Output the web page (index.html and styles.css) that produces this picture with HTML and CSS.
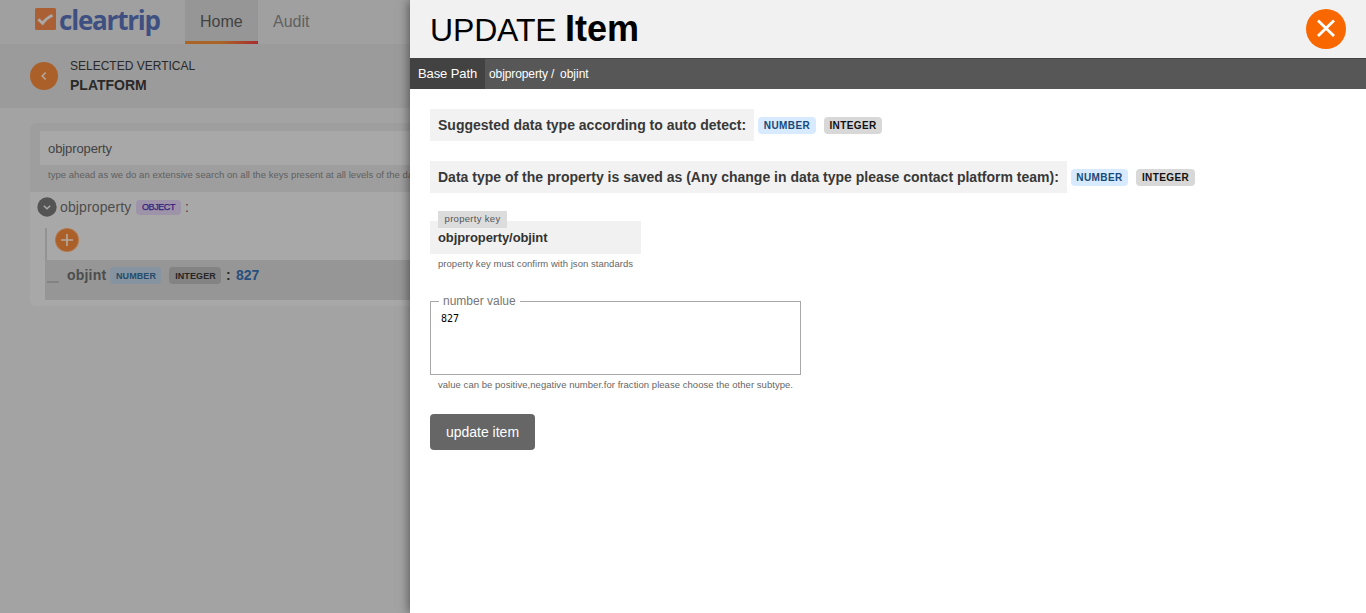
FILE: index.html
```html
<!DOCTYPE html>
<html lang="en">
<head>
<meta charset="utf-8">
<title>Update Item</title>
<link rel="stylesheet" href="styles.css">
</head>
<body>
<div class="page">
  <header class="topbar">
    <div class="logo">
      <svg class="logo-mark" viewBox="0 0 21 22"><rect width="21" height="22" rx="1.5" fill="#aa6034"/><path d="M3.300 11.300l4.400 4q4-5.500 9.800-8" fill="none" stroke="#a9a9a9" stroke-width="2.800"/></svg>
      <span class="logo-text">cleartrip</span>
    </div>
    <nav class="nav">
      <a class="tab tab-active">Home</a>
      <a class="tab">Audit</a>
    </nav>
  </header>
  <section class="vertical">
    <span class="back"><svg viewBox="0 0 28 28" width="28" height="28"><path d="M15.700 10.500l-3.500 3.500 3.500 3.500" fill="none" stroke="#b5aaa2" stroke-width="1.500"/></svg></span>
    <div class="vertical-text">
      <span class="vertical-label">SELECTED VERTICAL</span>
      <strong class="vertical-name">PLATFORM</strong>
    </div>
  </section>
  <main class="card">
    <div class="search">
      <div class="search-input">objproperty</div>
      <p class="search-hint">type ahead as we do an extensive search on all the keys present at all levels of the data</p>
    </div>
    <div class="tree">
      <div class="node">
        <svg class="toggle" viewBox="0 0 20 20"><circle cx="10" cy="10" r="9.700" fill="#545454"/><path d="M6.800 8.700l3.200 3.100 3.200-3.100" fill="none" stroke="#aaa" stroke-width="1.500"/></svg>
        <span class="node-key">objproperty</span>
        <span class="tag-dim tag-object">OBJECT</span>
        <span class="node-colon">:</span>
      </div>
      <div class="children">
        <svg class="add" viewBox="0 0 24 24"><circle cx="12" cy="12" r="12" fill="#b3774c"/><circle cx="12" cy="12" r="11" fill="#ab602a"/><path d="M12 6v12M6 12h12" stroke="#b5aaa2" stroke-width="1.600"/></svg>
        <div class="leaf">
          <span class="branch"></span>
          <span class="leaf-key">objint</span>
          <span class="tag-dim tag-number-dim">NUMBER</span>
          <span class="tag-dim tag-integer-dim">INTEGER</span>
          <span class="leaf-colon">:</span>
          <span class="leaf-value">827</span>
        </div>
      </div>
    </div>
  </main>
</div>

<aside class="drawer">
  <header class="drawer-head">
    <h1 class="title"><span class="title-action">UPDATE</span><b class="title-item">Item</b></h1>
    <svg class="close" viewBox="0 0 40 40"><circle cx="20" cy="20" r="20" fill="#f96700"/><path d="M12 11.500l16 15.500M28 11.500l-16 15.500" stroke="#fff" stroke-width="2.800"/></svg>
  </header>
  <div class="path">
    <span class="path-base">Base Path</span>
    <span class="path-parent">objproperty</span><span class="path-slash">/</span><span class="path-leaf">objint</span>
  </div>
  <div class="drawer-body">
    <div class="type-row">
      <span class="type-text suggested">Suggested data type according to auto detect:</span>
      <span class="tag tag-number">NUMBER</span>
      <span class="tag tag-integer">INTEGER</span>
    </div>
    <div class="type-row">
      <span class="type-text saved">Data type of the property is saved as (Any change in data type please contact platform team):</span>
      <span class="tag tag-number tag-narrow">NUMBER</span>
      <span class="tag tag-integer tag-wide">INTEGER</span>
    </div>
    <div class="key-field">
      <span class="key-label">property key</span>
      <div class="key-value">objproperty/objint</div>
      <span class="hint key-hint">property key must confirm with json standards</span>
    </div>
    <fieldset class="value-field">
      <legend class="value-legend">number value</legend>
      <div class="value-text">827</div>
    </fieldset>
    <span class="hint value-hint">value can be positive,negative number.for fraction please choose the other subtype.</span>
    <button class="update">update item</button>
  </div>
</aside>
</body>
</html>
```
FILE: styles.css
```css
* { box-sizing: border-box; }
body {
  margin: 0;
  width: 1366px;
  height: 613px;
  overflow: hidden;
  background: #a3a3a3;
  font-family: "Liberation Sans", Arial, sans-serif;
  white-space: nowrap;
}
svg { display: block; flex: none; }
.page { height: 613px; }

.topbar { display: flex; height: 44px; padding-left: 35px; background: #a0a0a0; }
.logo { display: flex; width: 150px; padding-top: 8px; }
.logo-mark { width: 21px; height: 22px; }
.logo-text {
  margin: -4px 0 0 3px;
  font: 700 26px/32px "Open Sans", sans-serif;
  letter-spacing: -1.2px;
  color: #3e4f82;
}
.nav { display: flex; }
.tab { height: 44px; padding: 0 15px; font-size: 16px; line-height: 43px; color: #616161; }
.tab-active {
  width: 73px;
  color: #424242;
  background: linear-gradient(90deg, #aa6427 50%, #a82e2e) bottom / 100% 3px no-repeat #969696;
}

.vertical { display: flex; height: 64px; padding: 14px 0 0 30px; background: #9b9b9b; }
.back { width: 28px; height: 28px; margin-top: 4px; border-radius: 50%; background: #ab602a; }
.vertical-text { display: flex; flex-direction: column; margin-left: 12px; color: #292929; }
.vertical-label { font-size: 12px; line-height: 16px; }
.vertical-name { font-size: 14px; line-height: 22px; }

.card { height: 183px; margin: 15px 0 0 30px; overflow: hidden; border-radius: 6px; background: #a8a8a8; }
.search { height: 69px; padding: 8px 0 0 10px; background: #9e9e9e; }
.search-input { height: 34px; padding-left: 8px; font-size: 13px; line-height: 35px; letter-spacing: -.1px; background: #a8a8a8; color: #424242; }
.search-hint { margin: 4px 0 0 8px; font-size: 9.500px; line-height: 12px; letter-spacing: .04px; color: #606060; }
.node { display: flex; align-items: center; height: 28px; padding: 2px 0 0 7px; }
.toggle { width: 20px; height: 20px; }
.node-key { width: 79px; padding-left: 3px; font-size: 14px; letter-spacing: .12px; color: #4d4d4d; }
.node-colon { margin-left: 4px; font-size: 14px; color: #424242; }
.tag-dim { flex: none; height: 17px; border-radius: 4px; font-size: 9px; line-height: 17px; text-align: center; }
.tag-object { width: 45px; height: 15px; line-height: 15px; letter-spacing: -.4px; background: #9d94aa; color: #36207d; -webkit-text-stroke: .25px #36207d; }
.children { margin-left: 15px; border-left: 2px solid #939393; height: 72px; }
.add { width: 24px; height: 24px; margin: 8px 0 8px 8px; }
.leaf { display: flex; align-items: center; height: 40px; margin-left: -2px; padding: 0 0 10px 2px; background: #969696; }
.branch { width: 12px; height: 2px; margin-top: 13px; background: #838383; }
.leaf-key { width: 43px; margin-left: 8px; font-size: 14px; font-weight: 700; letter-spacing: .2px; color: #4d4d4d; }
.tag-number-dim, .tag-integer-dim { padding-left: 1px; line-height: 18px; font-weight: 700; letter-spacing: .1px; }
.tag-number-dim { width: 51px; background: #8693a1; color: #254b6a; }
.tag-integer-dim { width: 52px; margin-left: 8px; background: #838383; color: #252525; }
.leaf-colon { width: 15px; padding-left: 5px; font-size: 14px; font-weight: 700; color: #292929; }
.leaf-value { font-size: 14px; font-weight: 700; color: #274f7e; }

/* The drawer slides over the dimmed page */
.drawer { position: absolute; inset: 0 0 0 410px; background: #fff; box-shadow: -1px 0 10px rgba(0,0,0,.5); }
.drawer-head { display: flex; justify-content: space-between; height: 58px; padding: 9px 20px 0; background: #f1f1f1; }
.title { display: flex; align-items: baseline; height: 40px; margin: 0; font-weight: 400; line-height: 40px; color: #000; }
.title-action { width: 135px; padding-bottom: 1px; font-size: 32px; letter-spacing: -.15px; }
.title-item { font-size: 36px; }
.close { width: 40px; height: 40px; }
.path { display: flex; height: 31px; border-top: 1px solid #424242; background: #575757; color: #fff; font-size: 12px; line-height: 30px; }
.path-base { width: 75px; padding-left: 8px; background: #424242; font-size: 13px; line-height: 29px; letter-spacing: -.1px; }
.path-parent { width: 66px; padding-left: 4px; letter-spacing: -.1px; }
.path-slash { width: 9px; }
.drawer-body { display: flex; flex-direction: column; align-items: flex-start; padding: 20px; }
.type-row { display: flex; align-items: center; height: 32px; margin-bottom: 20px; }
.type-text { height: 32px; margin-right: 4px; padding-left: 8px; background: #f2f2f2; font-size: 14px; font-weight: 700; line-height: 32px; color: #383838; }
.suggested { width: 324px; }
.saved { width: 637px; }
.tag { width: 58px; height: 17px; border-radius: 4px; font-size: 10px; font-weight: 700; line-height: 17px; letter-spacing: .4px; text-align: center; }
.tag-number { background: #d8eaff; color: #174979; }
.tag-narrow { width: 57px; }
.tag-integer { margin-left: 8px; background: #d8d8d8; color: #111; }
.tag-wide { width: 59px; }
.key-field { display: flex; flex-direction: column; width: 211px; height: 80px; margin-top: -2px; }
.key-label { z-index: 1; width: 69px; height: 17px; margin-left: 8px; background: #dcdcdc; font-size: 9.500px; line-height: 16px; letter-spacing: .3px; text-align: center; color: #555; }
.key-value { height: 33px; margin-top: -7px; padding-left: 8px; background: #f1f1f1; font-size: 13px; font-weight: 700; line-height: 33px; letter-spacing: -.1px; color: #333; }
.hint { padding-left: 8px; font-size: 9.500px; line-height: 12px; letter-spacing: .04px; color: #666; }
.key-hint { margin-top: 4px; }
.value-field { width: 371px; height: 81px; margin: 3px 0 0; padding: 0 10px; border: 1px solid #a8a8a8; }
.value-legend { height: 14px; margin-left: -2px; padding: 0 4px; font-size: 12px; line-height: 14px; color: #777; }
.value-text { padding-top: 4px; font: 10px/14px "DejaVu Sans Mono", monospace; color: #000; }
.value-hint { margin-top: 4px; }
.update { width: 105px; height: 36px; margin-top: 23px; padding: 0; border: 0; border-radius: 4px; background: #666; color: #fff; font: 14px/36px "Liberation Sans", Arial, sans-serif; }
```
